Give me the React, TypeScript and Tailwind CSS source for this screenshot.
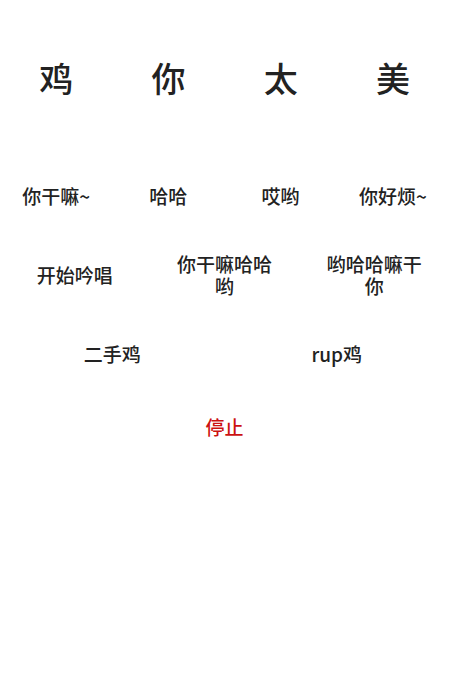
export default function App() {
  const title = ["鸡", "你", "太", "美"];
  const row2 = ["你干嘛~", "哈哈", "哎哟", "你好烦~"];
  const row3 = ["开始吟唱", "你干嘛哈哈哟", "哟哈哈嘛干你"];
  const row4 = ["二手鸡", "rup鸡"];

  return (
    <div
      className="min-h-screen bg-white text-[#222] pt-[59px]"
      style={{ fontFamily: '"Noto Sans CJK SC", "Noto Sans", sans-serif' }}
    >
      <div className="grid grid-cols-4 text-[34px] leading-[38px] font-medium text-center">
        {title.map((t, i) => (
          <div key={i}>{t}</div>
        ))}
      </div>

      <div className="grid grid-cols-4 mt-[88px] text-[19px] leading-[22px] font-medium text-center">
        {row2.map((t, i) => (
          <div key={i}>{t}</div>
        ))}
      </div>

      <div className="grid grid-cols-3 mt-[46px] text-[19px] leading-[22px] font-medium text-center items-center">
        {row3.map((t, i) => (
          <div key={i} className="flex justify-center">
            <span className="max-w-[105px] break-all">{t}</span>
          </div>
        ))}
      </div>

      <div className="grid grid-cols-2 mt-[46px] text-[19px] leading-[22px] font-medium text-center">
        {row4.map((t, i) => (
          <div key={i}>{t}</div>
        ))}
      </div>

      <div className="mt-[51px] text-center text-[19px] leading-[22px] font-medium text-[#cc1111]">
        停止
      </div>
    </div>
  );
}
